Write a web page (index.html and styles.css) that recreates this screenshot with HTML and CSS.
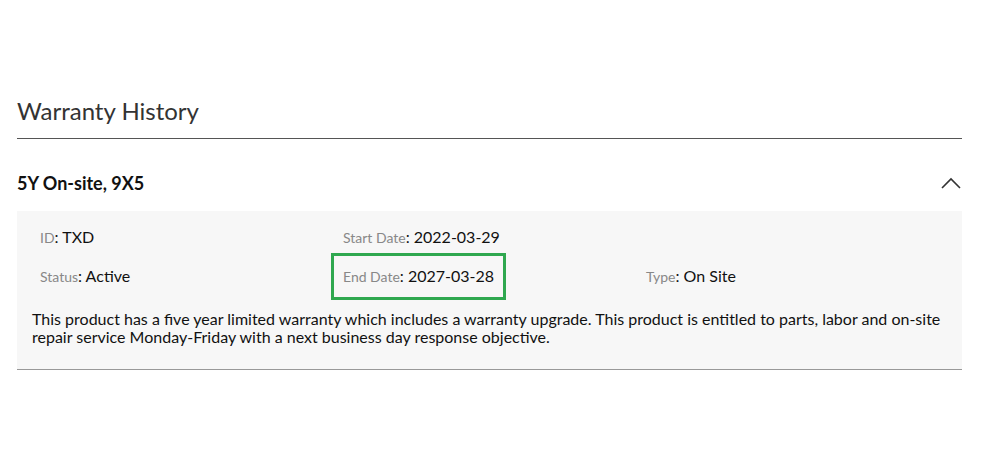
FILE: index.html
```html
<!DOCTYPE html>
<html lang="en">
<head>
    <meta charset="UTF-8">
    <title>Warranty History</title>
    <link rel="stylesheet" href="styles.css">
</head>
<body>
    <div class="warranty">
        <h2 class="warranty-title">Warranty History</h2>

        <!-- Warranty item -->
        <div class="item-header">
            <span class="item-name">5Y On-site, 9X5</span>
            <svg class="chevron" width="20" height="12" viewBox="0 0 20 12">
                <polyline points="1,11 10,2 19,11" fill="none" stroke="#333" stroke-width="1.6"/>
            </svg>
        </div>

        <div class="item-body">
            <div class="fields">
                <div><span class="field"><span class="label">ID</span>: TXD</span></div>
                <div><span class="field"><span class="label">Start Date</span>: 2022-03-29</span></div>
                <div></div>
                <div><span class="field"><span class="label">Status</span>: Active</span></div>
                <div><span class="field highlight"><span class="label">End Date</span>: 2027-03-28</span></div>
                <div><span class="field"><span class="label">Type</span>: On Site</span></div>
            </div>
            <p class="description">This product has a five year limited warranty which includes a warranty upgrade. This product is entitled to parts, labor and on-site repair service Monday-Friday with a next business day response objective.</p>
        </div>
    </div>
</body>
</html>
```

FILE: styles.css
```css
body {
    margin: 0;
    background: #fff;
    font-family: Lato, "Open Sans", sans-serif;
    color: #1a1a1a;
}

.warranty {
    width: 945px;
    margin-left: 17px;
    padding-top: 96px;
}

.warranty-title {
    margin: 0;
    font-size: 24px;
    font-weight: 400;
    line-height: 30px;
    color: #333;
    padding-bottom: 12px;
    border-bottom: 1px solid #555;
}

.item-header {
    display: flex;
    align-items: center;
    justify-content: space-between;
    padding: 33px 1px 17px 0;
    line-height: 22px;
}

.item-name {
    font-size: 18px;
    font-weight: 700;
    color: #111;
}

.item-body {
    background: #f7f7f7;
    padding: 7px 15px 23px;
    border-bottom: 1px solid #999;
}

.fields {
    display: grid;
    grid-template-columns: 303px 303px 1fr;
}

.field {
    display: inline-block;
    padding: 0 8px;
    line-height: 38px;
    font-size: 16px;
    color: #111;
}

.label {
    font-size: 14px;
    color: #888;
}

.highlight {
    outline: 3px solid #2fa84f;
    outline-offset: 1px;
}

.description {
    margin: 14px 0 0;
    font-size: 16px;
    line-height: 18px;
    color: #111;
}
```
